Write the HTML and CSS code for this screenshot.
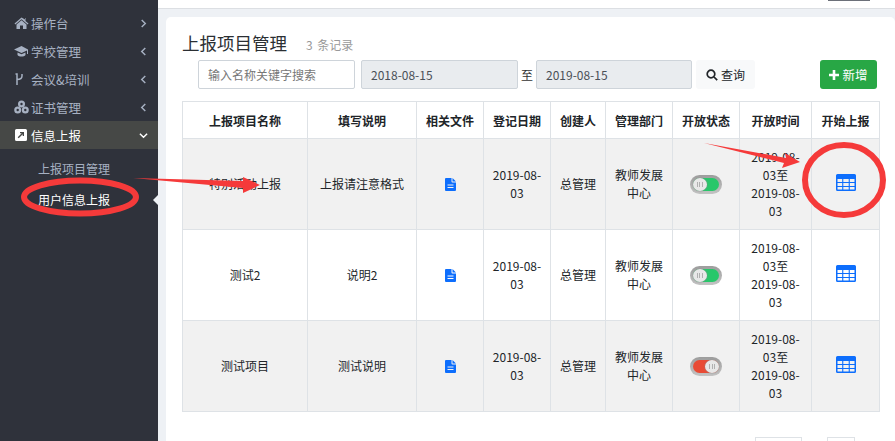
FILE: index.html
```html
<!DOCTYPE html>
<html lang="zh">
<head>
<meta charset="utf-8">
<title>上报项目管理</title>
<link rel="stylesheet" href="styles.css">
</head>
<body>
<div class="app">
  <aside class="sidebar">
    <ul class="menu">
      <li class="menu-item"><svg class="mi" viewBox="0 0 15 14"><path d="M7.500 1.500 0.500 7.500l.8.9L7.500 3.200l6.200 5.200.8-.9-3-2.500V2H11v1.500zM2.500 8.500V13h3.500V9.500h3V13h3.500V8.500L7.500 4.300z"/></svg><span class="ml">操作台</span><svg class="chev" viewBox="0 0 8 10"><path d="M2 1l4 4-4 4"/></svg></li>
      <li class="menu-item"><svg class="mi" viewBox="0 0 15 14"><path d="M7.500 2 0 5.500 7.500 9l5.500-2.500V10h1V5.500zM3.500 8.500V11c1.500 2 6.500 2 8 0V8.500L7.500 10.300z"/></svg><span class="ml">学校管理</span><svg class="chev" viewBox="0 0 8 10"><path d="M6 1 2 5l4 4"/></svg></li>
      <li class="menu-item"><svg class="mi" viewBox="0 0 15 14"><path d="M3 13V2H1.500M3 7.500c3 0 5-1 5-3.500V2" fill="none" stroke="currentColor" stroke-width="1.500"/></svg><span class="ml">会议&amp;培训</span><svg class="chev" viewBox="0 0 8 10"><path d="M6 1 2 5l4 4"/></svg></li>
      <li class="menu-item"><svg class="mi" viewBox="0 0 15 14"><circle cx="7.500" cy="4" r="3.500"/><circle cx="3.700" cy="10" r="3.500"/><circle cx="11.300" cy="10" r="3.500"/><circle class="hole" cx="7.500" cy="4" r="1.200"/><circle class="hole" cx="3.700" cy="10" r="1.200"/><circle class="hole" cx="11.300" cy="10" r="1.200"/></svg><span class="ml">证书管理</span><svg class="chev" viewBox="0 0 8 10"><path d="M6 1 2 5l4 4"/></svg></li>
      <li class="menu-item active"><svg class="mi" viewBox="0 0 15 14"><path fill-rule="evenodd" d="M2.500 1h9A1.500 1.500 0 0 1 13 2.500v9a1.500 1.500 0 0 1-1.500 1.500h-9A1.500 1.500 0 0 1 1 11.500v-9A1.500 1.500 0 0 1 2.500 1zM6 4v1.300h1.700L3.700 9.300l1 1 4-4V8H10V4z"/></svg><span class="ml">信息上报</span><svg class="chev" viewBox="0 0 10 8"><path d="M1 2l4 4 4-4"/></svg></li>
    </ul>
    <ul class="submenu">
      <li class="sub-item">上报项目管理</li>
      <li class="sub-item current">用户信息上报</li>
    </ul>
    <span class="notch"></span>
  </aside>
  <div class="main">
    <header class="topbar"><span class="avatar-edge"></span></header>
    <section class="card">
      <div class="title-row">
        <h1 class="title">上报项目管理</h1>
        <span class="count">3 条记录</span>
      </div>
      <div class="toolbar">
        <input class="field search" placeholder="输入名称关键字搜索">
        <input class="field date" value="2018-08-15" readonly>
        <span class="to">至</span>
        <input class="field date" value="2019-08-15" readonly>
        <button class="btn-query"><svg class="q-icon" viewBox="0 0 12 12"><circle cx="5" cy="5" r="3.800"/><path d="M8 8l3.200 3.200"/></svg>查询</button>
        <button class="btn-add"><svg class="add-icon" viewBox="0 0 10 10"><path d="M3.700 0h2.600v3.700H10v2.600H6.300V10H3.700V6.300H0V3.700h3.700z"/></svg>新增</button>
      </div>
      <table class="grid">
        <colgroup>
          <col class="c1"><col class="c2"><col class="c3"><col class="c4"><col class="c5"><col class="c6"><col class="c7"><col class="c8"><col class="c9">
        </colgroup>
        <thead>
          <tr><th>上报项目名称</th><th>填写说明</th><th>相关文件</th><th>登记日期</th><th>创建人</th><th>管理部门</th><th>开放状态</th><th>开放时间</th><th>开始上报</th></tr>
        </thead>
        <tbody>
          <tr class="odd">
            <td>特别活动上报</td><td>上报请注意格式</td>
            <td><svg class="file" viewBox="0 0 11 13"><path fill-rule="evenodd" d="M1 0h5.500v3.500a1 1 0 0 0 1 1H11V12a1 1 0 0 1-1 1H1a1 1 0 0 1-1-1V1a1 1 0 0 1 1-1zM2.500 6.500v1h6v-1zM2.500 9v1h6V9zM7.500 0 11 3.500H7.500z"/></svg></td>
            <td>2019-08-03</td><td>总管理</td><td>教师发展中心</td>
            <td><span class="toggle on"><span class="knob"></span></span></td>
            <td>2019-08-03至2019-08-03</td>
            <td><svg class="tbl" viewBox="0 0 20 17"><path fill-rule="evenodd" d="M1.500 0h17A1.500 1.500 0 0 1 20 1.500v14a1.500 1.500 0 0 1-1.500 1.500h-17A1.500 1.500 0 0 1 0 15.500v-14A1.500 1.500 0 0 1 1.500 0zM1.500 5v3h4.700V5zm5.800 0v3h5.400V5zm6.500 0v3h4.700V5zM1.500 9v3h4.700V9zm5.800 0v3h5.400V9zm6.500 0v3h4.700V9zM1.500 13v2.500h4.700V13zm5.800 0v2.500h5.400V13zm6.500 0v2.500h4.700V13z"/></svg></td>
          </tr>
          <tr>
            <td>测试2</td><td>说明2</td>
            <td><svg class="file" viewBox="0 0 11 13"><path fill-rule="evenodd" d="M1 0h5.500v3.500a1 1 0 0 0 1 1H11V12a1 1 0 0 1-1 1H1a1 1 0 0 1-1-1V1a1 1 0 0 1 1-1zM2.500 6.500v1h6v-1zM2.500 9v1h6V9zM7.500 0 11 3.500H7.500z"/></svg></td>
            <td>2019-08-03</td><td>总管理</td><td>教师发展中心</td>
            <td><span class="toggle on"><span class="knob"></span></span></td>
            <td>2019-08-03至2019-08-03</td>
            <td><svg class="tbl" viewBox="0 0 20 17"><path fill-rule="evenodd" d="M1.500 0h17A1.500 1.500 0 0 1 20 1.500v14a1.500 1.500 0 0 1-1.500 1.500h-17A1.500 1.500 0 0 1 0 15.500v-14A1.500 1.500 0 0 1 1.500 0zM1.500 5v3h4.700V5zm5.800 0v3h5.400V5zm6.500 0v3h4.700V5zM1.500 9v3h4.700V9zm5.800 0v3h5.400V9zm6.500 0v3h4.700V9zM1.500 13v2.500h4.700V13zm5.800 0v2.500h5.400V13zm6.500 0v2.500h4.700V13z"/></svg></td>
          </tr>
          <tr class="odd">
            <td>测试项目</td><td>测试说明</td>
            <td><svg class="file" viewBox="0 0 11 13"><path fill-rule="evenodd" d="M1 0h5.500v3.500a1 1 0 0 0 1 1H11V12a1 1 0 0 1-1 1H1a1 1 0 0 1-1-1V1a1 1 0 0 1 1-1zM2.500 6.500v1h6v-1zM2.500 9v1h6V9zM7.500 0 11 3.500H7.500z"/></svg></td>
            <td>2019-08-03</td><td>总管理</td><td>教师发展中心</td>
            <td><span class="toggle off"><span class="knob"></span></span></td>
            <td>2019-08-03至2019-08-03</td>
            <td><svg class="tbl" viewBox="0 0 20 17"><path fill-rule="evenodd" d="M1.500 0h17A1.500 1.500 0 0 1 20 1.500v14a1.500 1.500 0 0 1-1.500 1.500h-17A1.500 1.500 0 0 1 0 15.500v-14A1.500 1.500 0 0 1 1.500 0zM1.500 5v3h4.700V5zm5.800 0v3h5.400V5zm6.500 0v3h4.700V5zM1.500 9v3h4.700V9zm5.800 0v3h5.400V9zm6.500 0v3h4.700V9zM1.500 13v2.500h4.700V13zm5.800 0v2.500h5.400V13zm6.500 0v2.500h4.700V13z"/></svg></td>
          </tr>
        </tbody>
      </table>
      <div class="pager"><span class="page-a"></span><span class="page-b"></span></div>
    </section>
  </div>
</div>
<svg class="annot" viewBox="0 0 895 441" width="895" height="441">
  <ellipse class="ring" cx="80" cy="197" rx="56" ry="16.500"/>
  <ellipse class="ring" cx="844" cy="180" rx="39" ry="35"/>
  <path class="arrow" d="M133 178 243 181 243 177 260 185 243 193 243 188z"/>
  <path class="arrow" d="M704 143 786 158 785 153 800 162 782 168 784 163z"/>
</svg>
</body>
</html>
```
FILE: styles.css
```css
* { box-sizing: border-box; }
html, body { margin: 0; padding: 0; height: 441px; overflow: hidden; }
body { font-family: "Noto Sans CJK SC", sans-serif; font-size: 12px; color: #212529; background: #eef1f5; position: relative; }
ul { list-style: none; margin: 0; padding: 0; }
.app { display: flex; width: 895px; height: 441px; }
.sidebar { position: relative; flex: 0 0 158px; background: #2f323b; padding-top: 9px; color: #a7b1c2; }
.menu-item { display: flex; align-items: center; height: 28px; padding: 0 10px 0 14px; font-size: 12.500px; color: #a7b1c2; }
.menu-item .mi { width: 15px; height: 14px; margin-right: 2px; fill: currentColor; flex: none; }
.hole { fill: #2f323b; }
.ml { flex: 1; }
.chev { width: 9px; height: 9px; fill: none; stroke: currentColor; stroke-width: 1.600; flex: none; }
.menu-item.active { background: #464846; color: #fff; }
.submenu { padding-top: 4px; }
.sub-item { height: 31px; line-height: 31px; padding-left: 38px; color: #a7b1c2; font-size: 12px; }
.sub-item.current { color: #fff; }
.notch { position: absolute; right: 0; top: 195px; border: 5px solid transparent; border-right-color: #eef1f5; border-left-width: 0; }
.main { flex: 1; min-width: 0; display: flex; flex-direction: column; padding-bottom: 0; }
.topbar { position: relative; height: 9px; background: #fff; border-bottom: 1px solid #dcdfe3; flex: none; }
.avatar-edge { position: absolute; left: 670px; top: 0; width: 42px; height: 1px; background: #6c7079; }
.card { flex: 1; margin: 8px 0 0 8px; background: #fff; border-radius: 5px 5px 0 0; padding: 13px 16px 0 16px; min-height: 0; }
.title-row { display: flex; align-items: baseline; height: 27px; }
.title { margin: 0; font-size: 17.500px; font-weight: 400; line-height: 26px; color: #2b2f33; }
.count { margin-left: 19px; color: #999; font-size: 12px; word-spacing: 2px; }
.toolbar { display: flex; align-items: center; height: 29px; padding-left: 16px; margin-top: 3px; }
.field { height: 29px; border: 1px solid #ced4da; border-radius: 2px; padding: 0 9px; font: inherit; color: #495057; outline: none; background: #fff; }
.field::placeholder { color: #777; }
.search { width: 157px; margin-right: 6px; }
.date { width: 157px; background: #e9ecef; }
.date:last-of-type { width: 156px; }
.to { width: 18px; text-align: center; color: #333; }
.btn-query { margin-left: 4px; width: 59px; height: 29px; border: 0; border-radius: 3px; background: #f8f9fa; font: inherit; color: #212529; padding: 0; display: flex; align-items: center; justify-content: center; }
.q-icon { width: 12px; height: 12px; margin-right: 3px; fill: none; stroke: #212529; stroke-width: 1.700; }
.btn-add { margin-left: 65px; width: 57px; height: 29px; border: 0; border-radius: 3px; background: #28a745; color: #fff; font: inherit; font-size: 12.500px; padding: 0; display: flex; align-items: center; justify-content: center; }
.add-icon { width: 10px; height: 10px; margin-right: 3px; fill: #fff; }
.grid { table-layout: fixed; border-collapse: collapse; width: 697px; margin-top: 12px; text-align: center; }
.c1 { width: 125px; } .c2 { width: 109px; } .c3 { width: 67px; } .c4 { width: 67px; } .c5 { width: 55px; } .c6 { width: 67px; } .c7 { width: 67px; } .c8 { width: 72px; } .c9 { width: 68px; }
.grid th, .grid td { border: 1px solid #dee2e6; padding: 0 8px; vertical-align: middle; }
.grid th { height: 37px; font-weight: 700; color: #212529; padding: 0 2px; }
.grid td { height: 91px; line-height: 18px; overflow-wrap: anywhere; color: #212529; }
.grid tr.odd td { background: #f1f1f1; }
.file { width: 11px; height: 13px; fill: #0d6efd; display: block; margin: 0 auto; }
.tbl { width: 20px; height: 17px; fill: #0d6efd; display: block; margin: -3px auto 0; }
.toggle { display: block; width: 32px; height: 19px; margin: 0 auto; border-radius: 10px; background: linear-gradient(#9d9d9d, #c4c4c4); padding: 3px; position: relative; }
.toggle::before { content: ""; display: block; height: 13px; border-radius: 7px; background: #28c76a; }
.toggle.off::before { background: #e94b35; }
.knob { position: absolute; top: 3px; width: 14px; height: 13px; border-radius: 50%; background: #e8e8e8; box-shadow: 0 0 2px #888; }
.knob::after { content: ""; position: absolute; left: 4px; top: 4px; width: 6px; height: 5px; background: repeating-linear-gradient(90deg, #b0b0b0 0 1px, transparent 1px 2.500px); }
.toggle.on .knob { left: 3px; }
.toggle.off .knob { right: 3px; }
.pager { display: flex; margin-top: 25px; padding-left: 573px; }
.page-a, .page-b { display: block; height: 24px; background: #fff; border: 1px solid #dee2e6; }
.page-a { width: 47px; }
.page-b { width: 28px; margin-left: 25px; }
.annot { position: absolute; left: 0; top: 0; pointer-events: none; }
.ring { fill: none; stroke: #f53a3a; stroke-width: 6; }
.arrow { fill: #f53a3a; }
```
